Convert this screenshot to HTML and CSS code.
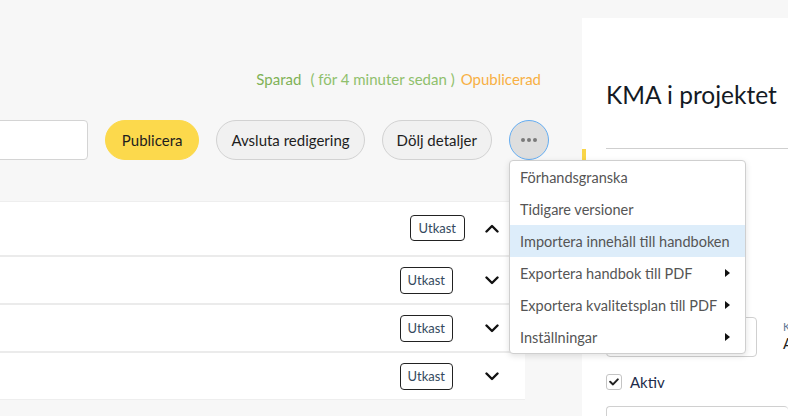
FILE: index.html
```html
<!DOCTYPE html>
<html lang="sv">
<head>
<meta charset="utf-8">
<title>KMA i projektet</title>
<link rel="stylesheet" href="styles.css">
</head>
<body>
<div class="page">
  <main class="main">
    <div class="status">
      <span class="saved">Sparad</span>
      <span class="saved-time">( för 4 minuter sedan )</span>
      <span class="unpublished">Opublicerad</span>
    </div>
    <div class="toolbar">
      <input class="search" type="text">
      <button class="btn btn-primary">Publicera</button>
      <button class="btn">Avsluta redigering</button>
      <button class="btn">Dölj detaljer</button>
      <div class="more-wrap">
        <button class="btn-more" aria-label="Fler val"><span class="dot"></span><span class="dot"></span><span class="dot"></span></button>
        <ul class="menu">
          <li class="menu-item">Förhandsgranska</li>
          <li class="menu-item">Tidigare versioner</li>
          <li class="menu-item is-hover">Importera innehåll till handboken</li>
          <li class="menu-item has-sub">Exportera handbok till PDF<span class="caret"></span></li>
          <li class="menu-item has-sub">Exportera kvalitetsplan till PDF<span class="caret"></span></li>
          <li class="menu-item has-sub">Inställningar<span class="caret"></span></li>
        </ul>
      </div>
    </div>
    <div class="list">
      <div class="row row-open">
        <span class="badge">Utkast</span>
        <svg class="chev" width="14" height="9" viewBox="0 0 14 9"><polyline points="1.5,7.5 7,2 12.5,7.5" fill="none" stroke="#111" stroke-width="2.4" stroke-linecap="round" stroke-linejoin="round"/></svg>
      </div>
      <div class="row">
        <span class="badge">Utkast</span>
        <svg class="chev" width="14" height="9" viewBox="0 0 14 9"><polyline points="1.5,1.5 7,7 12.5,1.5" fill="none" stroke="#111" stroke-width="2.4" stroke-linecap="round" stroke-linejoin="round"/></svg>
      </div>
      <div class="row">
        <span class="badge">Utkast</span>
        <svg class="chev" width="14" height="9" viewBox="0 0 14 9"><polyline points="1.5,1.5 7,7 12.5,1.5" fill="none" stroke="#111" stroke-width="2.4" stroke-linecap="round" stroke-linejoin="round"/></svg>
      </div>
      <div class="row">
        <span class="badge">Utkast</span>
        <svg class="chev" width="14" height="9" viewBox="0 0 14 9"><polyline points="1.5,1.5 7,7 12.5,1.5" fill="none" stroke="#111" stroke-width="2.4" stroke-linecap="round" stroke-linejoin="round"/></svg>
      </div>
    </div>
  </main>
  <aside class="panel">
    <h1 class="panel-title">KMA i projektet</h1>
    <div class="panel-rule"></div>
    <div class="panel-section"></div>
    <div class="fields">
      <div class="field-box"></div>
      <div class="field-side">
        <span class="field-label">Kategori</span>
        <span class="field-value">Allmänt</span>
      </div>
    </div>
    <label class="check">
      <span class="check-box"><svg width="10" height="8" viewBox="0 0 10 8"><polyline points="1.2,3.8 4,6.4 8.8,1.4" fill="none" stroke="#222" stroke-width="2" stroke-linecap="round" stroke-linejoin="round"/></svg></span>
      <span class="check-text">Aktiv</span>
    </label>
    <div class="field-wide"></div>
  </aside>
</div>
</body>
</html>
```
FILE: styles.css
```css
* { box-sizing: border-box; }
html, body {
  margin: 0;
  padding: 0;
  height: 100%;
  overflow: hidden;
}
body {
  background: #f7f7f7;
  font-family: Lato, "Noto Sans", sans-serif;
  color: #222;
}
.page {
  display: flex;
  height: 416px;
}
.main {
  width: 582px;
  flex: none;
  position: relative;
}
.status {
  display: flex;
  justify-content: flex-end;
  align-items: center;
  gap: 9px;
  padding: 70px 41px 0 0;
  height: 88px;
  font-size: 15px;
  line-height: 18px;
}
.saved { color: #7fb256; }
.saved-time { color: #8fc06c; }
.unpublished { color: #f7b044; margin-left: -3px; }
.toolbar {
  display: flex;
  justify-content: flex-end;
  align-items: center;
  gap: 17px;
  margin-top: 32px;
  padding-right: 33px;
  height: 40px;
}
.search {
  width: 180px;
  height: 40px;
  flex: none;
  margin-left: -100px;
  border: 1px solid #d4d4d4;
  border-radius: 4px;
  background: #fff;
}
.btn {
  height: 40px;
  padding: 0 14px;
  border-radius: 20px;
  border: 1px solid #d2d2d2;
  background: #f1f1f1;
  font-family: inherit;
  font-size: 15px;
  color: #1e1e1e;
  flex: none;
}
.btn-primary {
  background: #fcd94c;
  border-color: #fcd94c;
  padding: 0 16px;
}
.more-wrap {
  position: relative;
  flex: none;
}
.btn-more {
  width: 40px;
  height: 40px;
  border-radius: 50%;
  border: 1px solid #64adf2;
  background: #dedede;
  display: flex;
  align-items: center;
  justify-content: center;
  gap: 2px;
  padding: 0;
}
.dot {
  width: 4px;
  height: 4px;
  border-radius: 50%;
  background: #7a7a7a;
}
.menu {
  position: absolute;
  left: 0;
  top: 40px;
  width: 237px;
  margin: 0;
  padding: 0;
  list-style: none;
  background: #fff;
  border: 1px solid #cfcfcf;
  border-radius: 4px;
  box-shadow: 0 2px 6px rgba(0, 0, 0, 0.12);
  z-index: 10;
  overflow: hidden;
}
.menu-item {
  height: 32px;
  display: flex;
  align-items: center;
  justify-content: space-between;
  padding: 0 15px 0 10px;
  font-size: 14.5px;
  color: #555;
  white-space: nowrap;
}
.menu-item.is-hover { background: #ddedfa; }
.caret {
  width: 0;
  height: 0;
  border-top: 4px solid transparent;
  border-bottom: 4px solid transparent;
  border-left: 5px solid #111;
}
.list {
  margin-top: 41px;
  width: 525px;
  border-top: 1px solid #eeeeee;
}
.row {
  height: 48px;
  background: #fff;
  border-bottom: 2px solid #ebebeb;
  display: flex;
  justify-content: flex-end;
  align-items: center;
  gap: 32px;
  padding-right: 26px;
}
.row:last-child { border-bottom: 1px solid #eeeeee; height: 47px; }
.row-open {
  height: 55px;
  gap: 20px;
  padding-bottom: 1px;
}
.badge {
  height: 27px;
  padding: 0 7px;
  display: inline-flex;
  align-items: center;
  border: 1px solid #222;
  border-radius: 4px;
  font-size: 13px;
  color: #34495e;
}
.row-open .badge { height: 26px; padding: 0 8px; }
.chev { flex: none; }
.panel {
  flex: 1;
  margin-top: 18px;
  background: #fff;
  overflow: hidden;
}
.panel-title {
  margin: 61px 0 0 24px;
  font-size: 24.5px;
  line-height: 32px;
  font-weight: 400;
  color: #141a24;
  white-space: nowrap;
}
.panel-rule {
  margin: 37px 0 0 24px;
  border-top: 1px solid #cfcfcf;
}
.panel-section {
  height: 168px;
  border-left: 4px solid #f9d548;
}
.fields {
  display: flex;
  align-items: flex-start;
  gap: 26px;
  margin-left: 24px;
  height: 40px;
}
.field-box {
  width: 151px;
  height: 40px;
  flex: none;
  border: 1px solid #d0d0d0;
  border-radius: 4px;
}
.field-side {
  display: flex;
  flex-direction: column;
  flex: none;
  padding-top: 3px;
}
.field-label {
  font-size: 11px;
  line-height: 14px;
  color: #5f7895;
}
.field-value {
  font-size: 15px;
  line-height: 18px;
  color: #222;
}
.check {
  display: flex;
  align-items: center;
  gap: 8px;
  margin: 17px 0 0 24px;
  height: 16px;
}
.check-box {
  width: 16px;
  height: 16px;
  border: 1px solid #c4c4c4;
  border-radius: 3px;
  display: flex;
  align-items: center;
  justify-content: center;
}
.check-text {
  font-size: 15px;
  color: #1d2b4a;
}
.field-wide {
  margin: 16px 0 0 24px;
  height: 40px;
  border: 1px solid #d0d0d0;
  border-radius: 4px;
  border-right: none;
}
```
